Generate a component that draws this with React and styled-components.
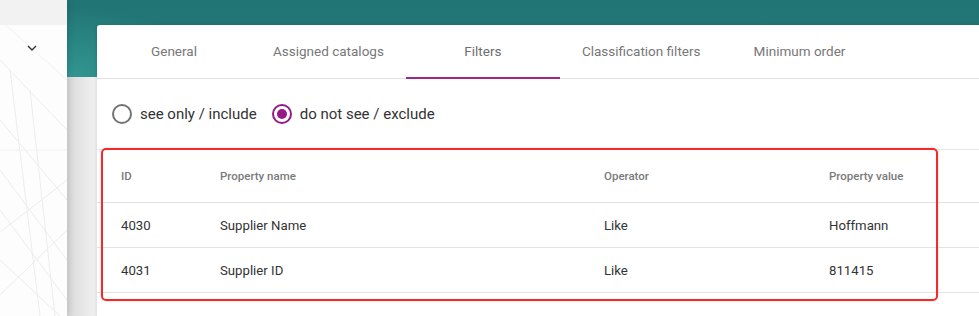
import React, { useState } from 'react';
import styled, { createGlobalStyle } from 'styled-components';

const GlobalStyle = createGlobalStyle`
  html, body {
    margin: 0;
    padding: 0;
    background: #f2f2f2;
    font-family: Roboto, "Liberation Sans", sans-serif;
    overflow: hidden;
  }
`;

const Page = styled.div`
  display: flex;
  width: 979px;
  height: 316px;
  overflow: hidden;
`;

const Sidebar = styled.aside`
  position: relative;
  flex: 0 0 67px;
  display: flex;
  flex-direction: column;
  background: #fdfdfd;
  box-shadow: 2px 0 6px rgba(0, 0, 0, 0.12);
  z-index: 2;
  overflow: hidden;
`;

const SidebarTop = styled.div`
  height: 25px;
  background: #f2f2f2;
`;

const SidebarToggle = styled.div`
  display: flex;
  justify-content: center;
  padding: 20px 4px 0 0;
  color: #333;
  z-index: 1;
`;

const Pattern = styled.svg`
  position: absolute;
  inset: 0;
  pointer-events: none;
`;

const Main = styled.main`
  flex: 1;
  min-width: 0;
  display: flex;
  flex-direction: column;
  background:
    linear-gradient(to right, rgba(0, 0, 0, 0.1), rgba(0, 0, 0, 0) 30px) 0 77px / 100% 100% no-repeat,
    radial-gradient(ellipse 140px 70px at 0 100%, rgba(70, 185, 175, 0.45), rgba(70, 185, 175, 0)) 0 0 / 100% 77px no-repeat,
    linear-gradient(#217574, #237a78) 0 0 / 100% 77px no-repeat,
    #f2f2f2;
  padding: 25px 0 0 30px;
`;

const Card = styled.section`
  position: relative;
  width: 1000px;
  flex: 1;
  background: #fff;
  border-radius: 3px 0 0 0;
  box-shadow: 0 1px 4px rgba(0, 0, 0, 0.14);
`;

const TabBar = styled.nav`
  display: flex;
  height: 53px;
  border-bottom: 1px solid #e2e2e2;
`;

const Tab = styled.button`
  box-sizing: border-box;
  min-width: 154px;
  padding: 0 22px;
  border: none;
  background: none;
  font-family: inherit;
  font-size: 13.5px;
  color: ${p => (p.$active ? '#6d6d6d' : '#777')};
  border-bottom: 2px solid ${p => (p.$active ? '#9b278f' : 'transparent')};
  margin-bottom: -1px;
  cursor: pointer;
  white-space: nowrap;
`;

const RadioRow = styled.div`
  display: flex;
  align-items: center;
  gap: 15px;
  height: 70px;
  padding-left: 15px;
`;

const RadioLabel = styled.label`
  display: flex;
  align-items: center;
  gap: 8px;
  font-size: 15px;
  color: #333;
  cursor: pointer;
`;

const RadioCircle = styled.span`
  position: relative;
  width: 16px;
  height: 16px;
  border-radius: 50%;
  border: 2px solid ${p => (p.$checked ? '#951a86' : '#737373')};

  &::after {
    content: '';
    position: absolute;
    inset: 3px;
    border-radius: 50%;
    background: ${p => (p.$checked ? '#951a86' : 'transparent')};
  }
`;

const Table = styled.div`
  border-top: 1px solid #e6e6e6;
`;

const Row = styled.div`
  display: grid;
  grid-template-columns: 99px 384px 225px 1fr;
  align-items: center;
  height: ${p => (p.$head ? '52px' : '44px')};
  padding-left: 24px;
  border-bottom: 1px solid #e3e3e3;
  font-size: ${p => (p.$head ? '11.5px' : '13.2px')};
  font-weight: ${p => (p.$head ? 500 : 400)};
  color: ${p => (p.$head ? '#7a7a7a' : '#333')};
`;

const Highlight = styled.div`
  position: absolute;
  left: 4px;
  top: 123px;
  width: 833px;
  height: 149px;
  border: 2px solid #f22a2a;
  border-radius: 5px;
  box-shadow: 0 0 3px rgba(0, 0, 0, 0.15);
  pointer-events: none;
`;

const tabs = ['General', 'Assigned catalogs', 'Filters', 'Classification filters', 'Minimum order'];

const rows = [
  { id: '4030', name: 'Supplier Name', op: 'Like', value: 'Hoffmann' },
  { id: '4031', name: 'Supplier ID', op: 'Like', value: '811415' },
];

const Chevron = () => (
  <svg width="10" height="6" viewBox="0 0 10 6" fill="none" stroke="#333" strokeWidth="1.4">
    <path d="M1 1l4 4 4-4" />
  </svg>
);

const SidebarPattern = () => (
  <Pattern width="67" height="316" viewBox="0 0 67 316" stroke="#ececec" strokeWidth="1" fill="none">
    <path d="M0 60 L67 130" />
    <path d="M0 120 L67 200" />
    <path d="M0 170 L67 260" />
    <path d="M0 210 L67 300" />
    <path d="M0 260 L60 316" />
    <path d="M10 70 L40 316" />
    <path d="M30 90 L55 316" />
    <path d="M-10 240 L67 180" />
    <path d="M-5 300 L67 230" />
    <path d="M0 20 L67 80" stroke="#f2f2f2" />
    <path d="M0 150 L67 150" stroke="#f2f2f2" />
  </Pattern>
);

export default function App() {
  const [active, setActive] = useState('Filters');
  const [mode, setMode] = useState('exclude');

  return (
    <>
      <GlobalStyle />
      <Page>
        <Sidebar>
          <SidebarPattern />
          <SidebarTop />
          <SidebarToggle>
            <Chevron />
          </SidebarToggle>
        </Sidebar>
        <Main>
          <Card>
            <TabBar>
              {tabs.map(t => (
                <Tab key={t} $active={t === active} onClick={() => setActive(t)}>
                  {t}
                </Tab>
              ))}
            </TabBar>
            <RadioRow>
              <RadioLabel onClick={() => setMode('include')}>
                <RadioCircle $checked={mode === 'include'} />
                see only / include
              </RadioLabel>
              <RadioLabel onClick={() => setMode('exclude')}>
                <RadioCircle $checked={mode === 'exclude'} />
                do not see / exclude
              </RadioLabel>
            </RadioRow>
            <Table>
              <Row $head>
                <span>ID</span>
                <span>Property name</span>
                <span>Operator</span>
                <span>Property value</span>
              </Row>
              {rows.map(r => (
                <Row key={r.id}>
                  <span>{r.id}</span>
                  <span>{r.name}</span>
                  <span>{r.op}</span>
                  <span>{r.value}</span>
                </Row>
              ))}
            </Table>
            <Highlight />
          </Card>
        </Main>
      </Page>
    </>
  );
}
